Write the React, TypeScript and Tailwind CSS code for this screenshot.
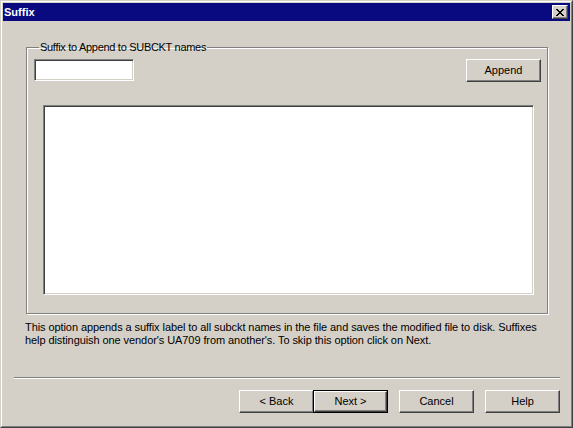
import React from "react";

const font = { fontFamily: '"Liberation Sans", Arial, sans-serif' };

function Btn({ label, isDefault = false }: { label: string; isDefault?: boolean }) {
  if (isDefault) {
    return (
      <div className="w-[75px] h-[23px] border border-black -ml-px">
        <div className="w-full h-full border border-t-white border-l-white border-b-[#404040] border-r-[#404040] shadow-[inset_-1px_-1px_0_#808080] flex items-center justify-center text-[11px] text-black">
          {label}
        </div>
      </div>
    );
  }
  return (
    <div className="w-[75px] h-[23px] border border-t-white border-l-white border-b-[#404040] border-r-[#404040] shadow-[inset_-1px_-1px_0_#808080] flex items-center justify-center text-[11px] text-black">
      {label}
    </div>
  );
}

export default function App() {
  return (
    <div style={font} className="w-[573px] h-[428px] bg-[#d4d0c8] overflow-hidden">
      <div className="w-full h-full border border-t-[#d4d0c8] border-l-[#d4d0c8] border-b-[#404040] border-r-[#404040]">
        <div className="w-full h-full border border-t-white border-l-white border-b-[#808080] border-r-[#808080] p-px flex flex-col">
          {/* title bar */}
          <div className="h-[18px] bg-[#0a0a80] flex items-center justify-between pl-[1px] pr-[2px]">
            <span className="text-white font-bold text-[11px] leading-none">Suffix</span>
            <div className="w-[16px] h-[14px] bg-[#d4d0c8] border border-t-white border-l-white border-b-[#404040] border-r-[#404040] shadow-[inset_-1px_-1px_0_#808080] flex items-center justify-center">
              <svg width="8" height="7" viewBox="0 0 8 7" shapeRendering="crispEdges">
                <path
                  fill="#000"
                  d="M0 0h2v1h-2zM6 0h2v1h-2zM1 1h2v1h-2zM5 1h2v1h-2zM2 2h4v1h-4zM3 3h2v1h-2zM2 4h4v1h-4zM1 5h2v1h-2zM5 5h2v1h-2zM0 6h2v1h-2zM6 6h2v1h-2z"
                />
              </svg>
            </div>
          </div>

          {/* body */}
          <div className="flex-1 flex flex-col">
            <fieldset className="ml-[23px] mt-[20px] w-[522px] h-[273px] border border-[#808080] shadow-[inset_1px_1px_0_white,1px_1px_0_white] px-[7px]">
              <legend className="ml-[5px] px-[1px] text-[11px] leading-[13px] tracking-[-0.3px] text-black">
                Suffix to Append to SUBCKT names
              </legend>
              <div className="flex justify-between items-start mt-[5px]">
                <div className="w-[100px] h-[22px] bg-white border border-t-[#808080] border-l-[#808080] border-b-white border-r-white shadow-[inset_1px_1px_0_#404040,inset_-1px_-1px_0_#d4d0c8]" />
                <div className="mr-[-1px]">
                  <Btn label="Append" />
                </div>
              </div>
              <div className="ml-[9px] mt-[23px] w-[491px] h-[190px] bg-white border border-t-[#808080] border-l-[#808080] border-b-white border-r-white shadow-[inset_1px_1px_0_#404040,inset_-1px_-1px_0_#d4d0c8]" />
            </fieldset>

            <p className="ml-[22px] mt-[7px] text-[11px] leading-[13px] tracking-[-0.08px] text-black">
              This option appends a suffix label to all subckt names in the file and saves the modified file to disk. Suffixes
              <br />
              help distinguish one vendor's UA709 from another's. To skip this option click on Next.
            </p>

            <div className="ml-[11px] mt-[30px] w-[546px] h-[2px] border-t border-t-[#808080] border-b border-b-white" />

            <div className="flex justify-end gap-[11px] mr-[10px] mt-[11px]">
              <div className="flex">
                <Btn label="< Back" />
                <Btn label="Next >" isDefault />
              </div>
              <Btn label="Cancel" />
              <Btn label="Help" />
            </div>
          </div>
        </div>
      </div>
    </div>
  );
}
